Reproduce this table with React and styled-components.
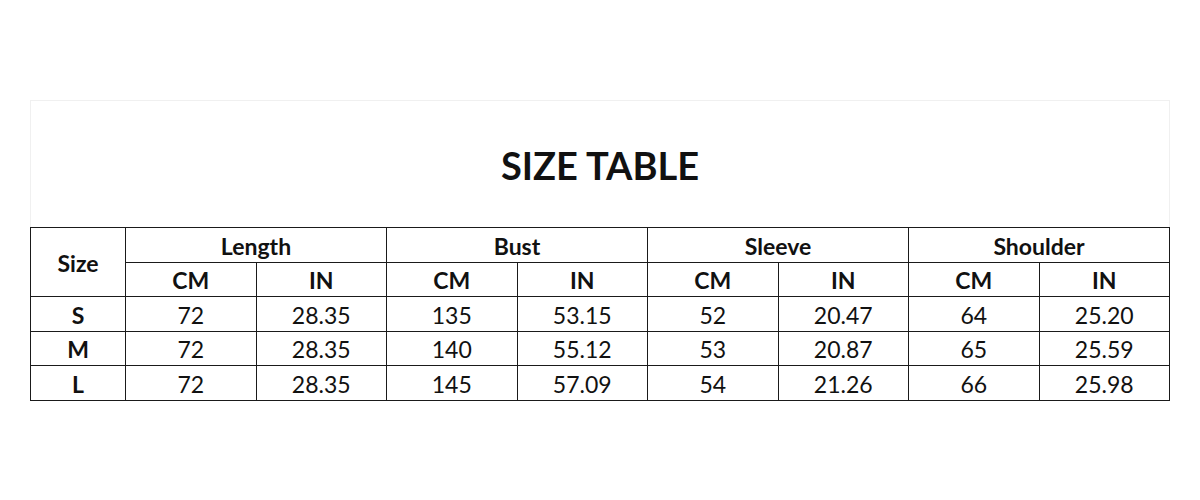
import { createGlobalStyle, styled } from "styled-components";

const GlobalStyle = createGlobalStyle`
  body {
    margin: 0;
    background: #fff;
    font-family: Lato, "Open Sans", sans-serif;
    color: #111;
  }
`;

const Page = styled.div`
  width: 1200px;
  height: 500px;
  padding: 100px 0 0 30px;
  box-sizing: border-box;
`;

const Sheet = styled.div`
  width: 1140px;
`;

const TitleBox = styled.div`
  height: 126px;
  border: 1px solid #f0f0f0;
  border-bottom: none;
  display: flex;
  align-items: center;
  justify-content: center;
`;

const Title = styled.h1`
  margin: 0;
  font-size: 38px;
  font-weight: 700;
  padding-top: 2px;
`;

const Table = styled.table`
  width: 1140px;
  border-collapse: collapse;
  table-layout: fixed;
  font-size: 23px;
`;

const Cell = styled.td`
  border: 1px solid #1a1a1a;
  height: 30.5px;
  padding: 3px 0 0;
  text-align: center;
  vertical-align: middle;
  font-weight: ${(p) => (p.$bold ? 700 : 400)};
  line-height: 1;
`;

const columns = [
  { name: "Length", rows: [["72", "28.35"], ["72", "28.35"], ["72", "28.35"]] },
  { name: "Bust", rows: [["135", "53.15"], ["140", "55.12"], ["145", "57.09"]] },
  { name: "Sleeve", rows: [["52", "20.47"], ["53", "20.87"], ["54", "21.26"]] },
  { name: "Shoulder", rows: [["64", "25.20"], ["65", "25.59"], ["66", "25.98"]] },
];

const sizes = ["S", "M", "L"];

export default function App() {
  return (
    <>
      <GlobalStyle />
      <Page>
        <Sheet>
          <TitleBox>
            <Title>SIZE TABLE</Title>
          </TitleBox>
          <Table>
            <colgroup>
              <col style={{ width: 95 }} />
              {columns.map((c) => [
                <col key={c.name + "cm"} />,
                <col key={c.name + "in"} />,
              ])}
            </colgroup>
            <tbody>
              <tr>
                <Cell as="th" rowSpan={2} $bold>
                  Size
                </Cell>
                {columns.map((c) => (
                  <Cell as="th" colSpan={2} key={c.name} $bold>
                    {c.name}
                  </Cell>
                ))}
              </tr>
              <tr>
                {columns.map((c) => [
                  <Cell as="th" key={c.name + "cm"} $bold>
                    CM
                  </Cell>,
                  <Cell as="th" key={c.name + "in"} $bold>
                    IN
                  </Cell>,
                ])}
              </tr>
              {sizes.map((s, i) => (
                <tr key={s}>
                  <Cell $bold>{s}</Cell>
                  {columns.map((c) => [
                    <Cell key={c.name + "cm"}>{c.rows[i][0]}</Cell>,
                    <Cell key={c.name + "in"}>{c.rows[i][1]}</Cell>,
                  ])}
                </tr>
              ))}
            </tbody>
          </Table>
        </Sheet>
      </Page>
    </>
  );
}
